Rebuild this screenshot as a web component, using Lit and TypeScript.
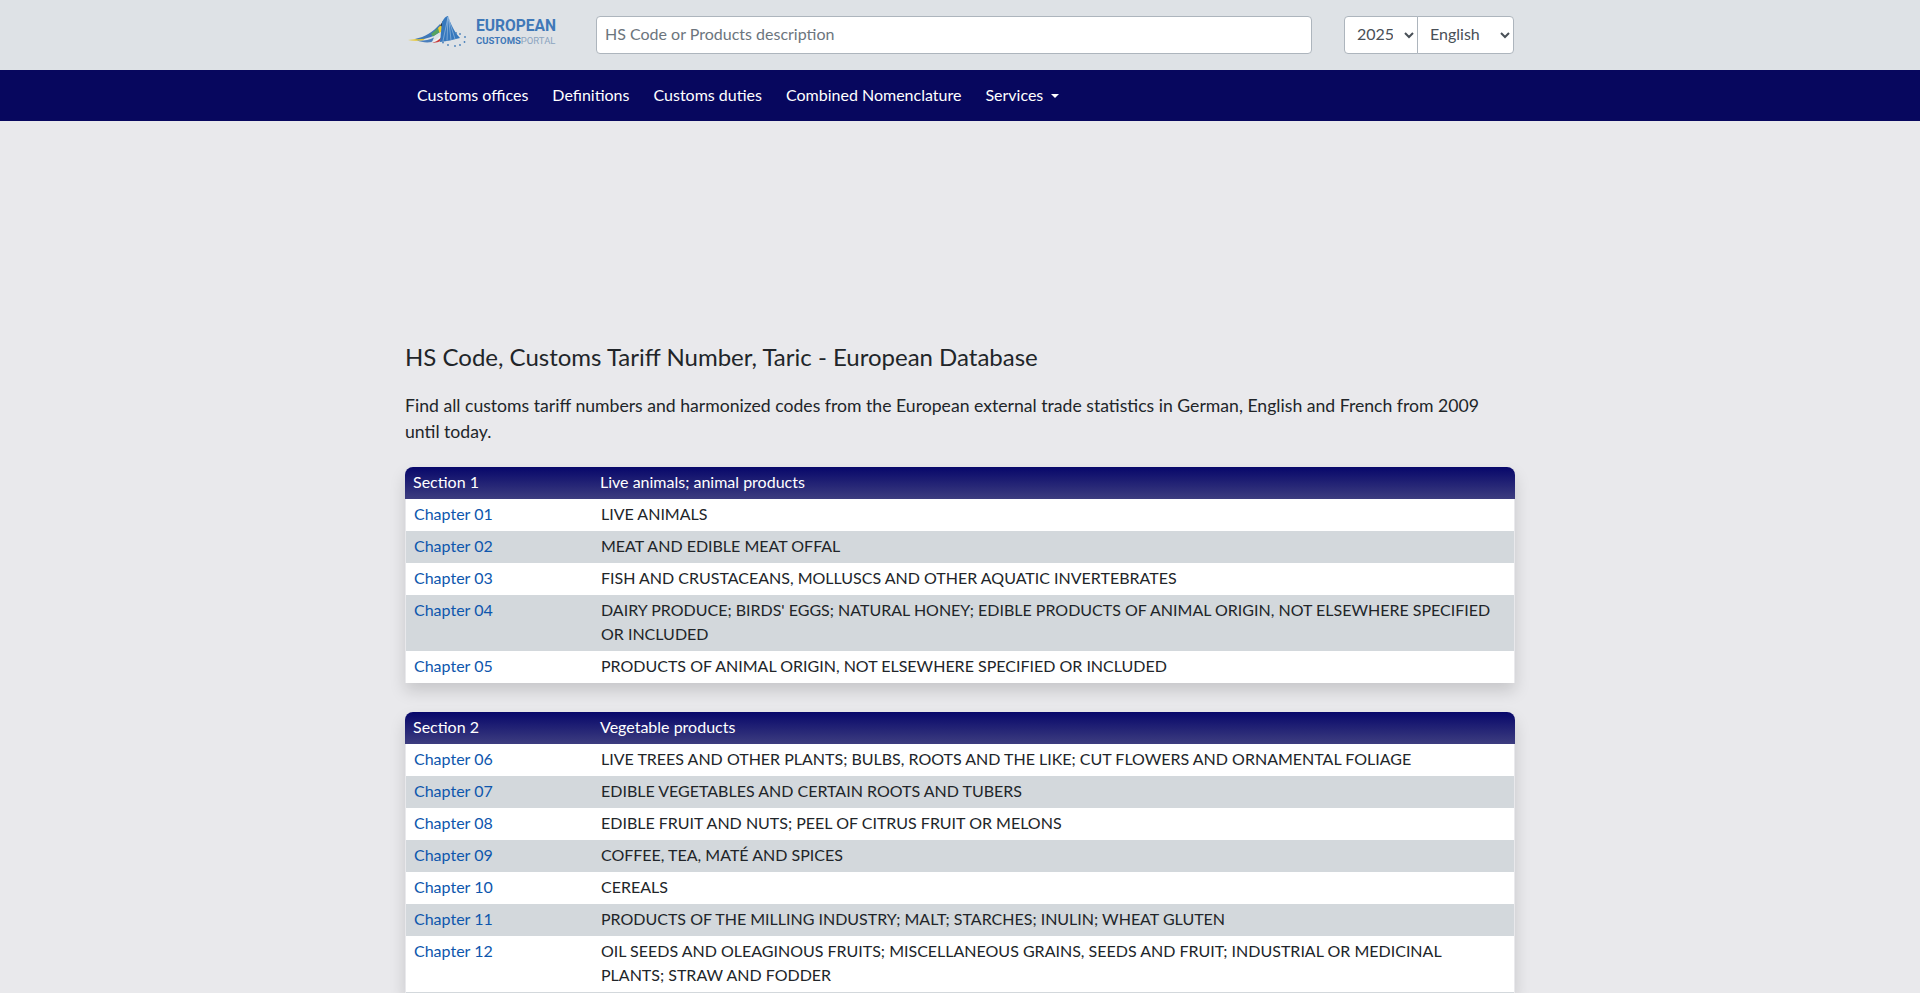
import { LitElement, html, css, svg } from "lit";
import { customElement } from "lit/decorators.js";

interface Row { c: string; t: string; }
interface Section { n: number; title: string; rows: Row[]; }

const SECTIONS: Section[] = [
  {
    n: 1,
    title: "Live animals; animal products",
    rows: [
      { c: "01", t: "LIVE ANIMALS" },
      { c: "02", t: "MEAT AND EDIBLE MEAT OFFAL" },
      { c: "03", t: "FISH AND CRUSTACEANS, MOLLUSCS AND OTHER AQUATIC INVERTEBRATES" },
      { c: "04", t: "DAIRY PRODUCE; BIRDS' EGGS; NATURAL HONEY; EDIBLE PRODUCTS OF ANIMAL ORIGIN, NOT ELSEWHERE SPECIFIED OR INCLUDED" },
      { c: "05", t: "PRODUCTS OF ANIMAL ORIGIN, NOT ELSEWHERE SPECIFIED OR INCLUDED" },
    ],
  },
  {
    n: 2,
    title: "Vegetable products",
    rows: [
      { c: "06", t: "LIVE TREES AND OTHER PLANTS; BULBS, ROOTS AND THE LIKE; CUT FLOWERS AND ORNAMENTAL FOLIAGE" },
      { c: "07", t: "EDIBLE VEGETABLES AND CERTAIN ROOTS AND TUBERS" },
      { c: "08", t: "EDIBLE FRUIT AND NUTS; PEEL OF CITRUS FRUIT OR MELONS" },
      { c: "09", t: "COFFEE, TEA, MATÉ AND SPICES" },
      { c: "10", t: "CEREALS" },
      { c: "11", t: "PRODUCTS OF THE MILLING INDUSTRY; MALT; STARCHES; INULIN; WHEAT GLUTEN" },
      { c: "12", t: "OIL SEEDS AND OLEAGINOUS FRUITS; MISCELLANEOUS GRAINS, SEEDS AND FRUIT; INDUSTRIAL OR MEDICINAL PLANTS; STRAW AND FODDER" },
    ],
  },
];

const NAV = ["Customs offices", "Definitions", "Customs duties", "Combined Nomenclature"];

const logo = svg`<svg class="logo-mark" viewBox="0 0 65 36" width="65" height="36" aria-hidden="true">
  <path d="M3 26 C10 25.4 16 24.4 22 22.5 L18 26.4 C12 27 7 27 3 26Z" fill="#e8c72e"/>
  <path d="M10 25 C20 23 28 18 35 10 L35 18 C28 23 20 26 10 25Z" fill="#3f78b8"/>
  <path d="M12 26.6 C18 27 24 26 29 23.5 L27 28 C21 29 16 28 12 26.6Z" fill="#4a7fbc"/>
  <path d="M26 20 L33 14 L34.5 18 L28 22.5Z" fill="#58a35f"/>
  <path d="M33 14 L37 10 L37 17 L34.5 19Z" fill="#efcb2e"/>
  <path d="M35 11.5 L38 7 L38.5 10 L37 12.5Z" fill="#26262a"/>
  <path d="M26 27.6 C30 26.8 33 25 36 21 L35.5 24 C33 26.4 30 27.8 26 27.6Z" fill="#f4f4f4"/>
  <path d="M27 28.6 C31 28 34 26 36.5 23 L35.5 27 C33 28.4 30 29 27 28.6Z" fill="#c83a3a"/>
  <path d="M37 8 C39 4 41 2 43 2 C45 8 49 18 55 24 C48 26 42 27 35 28Z" fill="#3678bd"/>
  <path d="M43 3 L38 27 M43 3 L42 26.5 M43.5 3 L46 26 M44 6 L50 25" stroke="#a9c8e6" stroke-width=".6" fill="none"/>
  <g fill="#4a80ba">
    <circle cx="51" cy="19" r=".9"/><circle cx="55" cy="20" r=".9"/><circle cx="60" cy="23" r=".9"/>
    <circle cx="59.5" cy="28" r=".9"/><circle cx="50" cy="32" r=".9"/><circle cx="55" cy="31" r=".9"/>
    <circle cx="43" cy="31" r=".9"/><circle cx="38" cy="28.5" r=".9"/>
  </g>
</svg>`;

@customElement("app-root")
export class AppRoot extends LitElement {
  static styles = css`
    :host {
      display: block;
      min-height: 100vh;
      background: #e9e9ec;
      color: #212529;
      font-family: Lato, "Liberation Sans", sans-serif;
      font-size: 16px;
      line-height: 24px;
    }
    * { box-sizing: border-box; }
    .wrap {
      width: 1140px;
      margin: 0 auto;
      padding: 0 15px;
    }
    .top { background: #dee2e6; height: 70px; }
    .top .wrap {
      display: flex;
      align-items: center;
      height: 70px;
    }
    .brand {
      width: 191px;
      display: flex;
      align-items: center;
      flex: none;
      padding-bottom: 6px;
    }
    .logo-mark { flex: none; }
    .brand-text {
      margin-left: 6px;
      display: flex;
      flex-direction: column;
      color: #3f78b8;
      font-family: Roboto, "Liberation Sans", sans-serif;
      font-weight: 700;
    }
    .brand-text .b1 { font-size: 15.6px; line-height: 17px; }
    .brand-text .b2 { font-size: 9.5px; line-height: 11px; }
    .brand-text .b2 span { font-weight: 400; color: #8ba4bf; }
    .search {
      width: 716px;
      height: 38px;
      border: 1px solid #adb5bd;
      border-radius: 4px;
      background: #fff;
      color: #495057;
      font: inherit;
      padding: 4px 8px 8px;
      outline: none;
      flex: none;
    }
    .search::placeholder { color: #6c757d; opacity: 1; }
    .selects { display: flex; margin-left: 32px; flex: none; }
    select {
      height: 38px;
      border: 1px solid #adb5bd;
      background: #fff;
      color: #495057;
      font: inherit;
      padding: 4px 8px 8px;
      outline: none;
    }
    .year { width: 74px; border-radius: 4px 0 0 4px; }
    .lang { width: 97px; margin-left: -1px; border-radius: 0 4px 4px 0; }
    nav { background: #07075e; height: 51px; }
    nav .wrap { display: flex; align-items: center; height: 51px; padding-bottom: 2px; }
    nav a {
      color: #fff;
      text-decoration: none;
      padding: 0 12px;
      white-space: nowrap;
    }
    .caret {
      display: inline-block;
      margin-left: 8px;
      vertical-align: 3px;
      border-top: 4.8px solid #fff;
      border-left: 4.8px solid transparent;
      border-right: 4.8px solid transparent;
    }
    .ad { height: 210px; }
    h1 {
      margin: 0 0 22px;
      padding-top: 11px;
      font-size: 24px;
      line-height: 29px;
      font-weight: 400;
    }
    .intro { margin: 0 0 22px; font-size: 17.64px; line-height: 26px; }
    .table {
      margin-bottom: 29px;
      box-shadow: 0 8px 16px rgba(0, 0, 0, .15);
      border-radius: 8px 8px 0 0;
    }
    .table:last-of-type { margin-bottom: 0; }
    .table:last-of-type::after {
      content: "";
      display: block;
      height: 1px;
      margin: 0 1px;
      background: #d3d8dc;
    }
    .row {
      display: grid;
      grid-template-columns: 187px 1fr;
    }
    .head {
      height: 32px;
      align-items: center;
      color: #fff;
      background: linear-gradient(#07076a, #3d3d7f);
      border-radius: 8px 8px 0 0;
      padding: 0 8px 2px;
    }
    .body {
      background: #fff;
      margin: 0 1px;
      padding: 3px 11px 5px 8px;
    }
    .body:nth-child(odd) { background: #d3d8dc; }
    .body > a { color: #0d56ad; text-decoration: none; }
  `;

  render() {
    return html`
      <header class="top">
        <div class="wrap">
          <div class="brand">
            ${logo}
            <div class="brand-text">
              <span class="b1">EUROPEAN</span>
              <span class="b2">CUSTOMS<span>PORTAL</span></span>
            </div>
          </div>
          <input class="search" placeholder="HS Code or Products description" />
          <div class="selects">
            <select class="year"><option>2025</option></select>
            <select class="lang"><option>English</option></select>
          </div>
        </div>
      </header>
      <nav>
        <div class="wrap">
          ${NAV.map((n) => html`<a href="#">${n}</a>`)}
          <a href="#">Services<span class="caret"></span></a>
        </div>
      </nav>
      <main class="wrap">
        <div class="ad"></div>
        <h1>HS Code, Customs Tariff Number, Taric - European Database</h1>
        <p class="intro">Find all customs tariff numbers and harmonized codes from the European external trade statistics in German, English and French from 2009 until today.</p>
        ${SECTIONS.map(
          (s) => html`
            <section class="table">
              <div class="row head"><div>Section ${s.n}</div><div>${s.title}</div></div>
              ${s.rows.map(
                (r) => html`<div class="row body"><a href="#">Chapter ${r.c}</a><div>${r.t}</div></div>`
              )}
            </section>
          `
        )}
      </main>
    `;
  }
}
